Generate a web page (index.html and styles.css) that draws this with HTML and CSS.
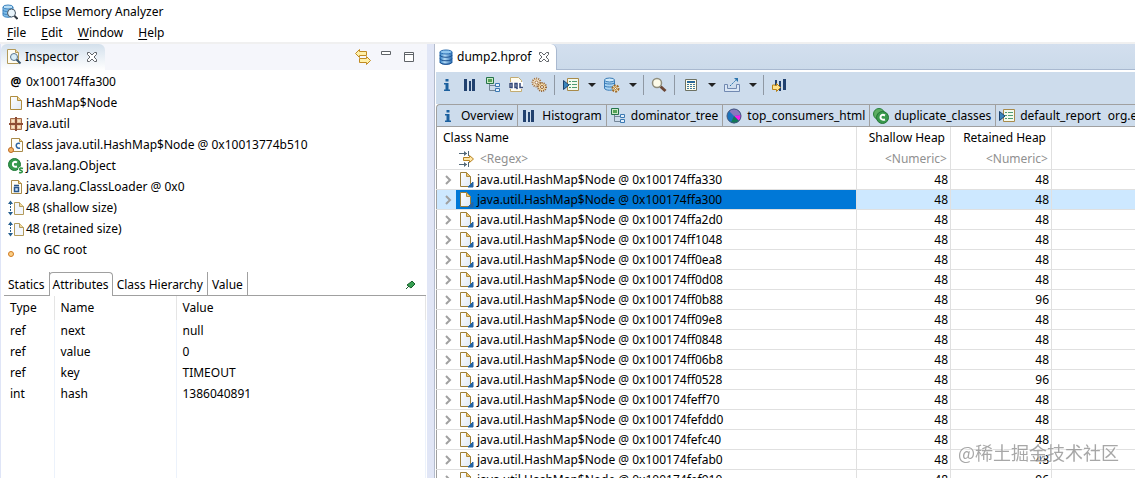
FILE: index.html
```html
<!DOCTYPE html>
<html lang="en">

<head>
    <meta charset="utf-8">
    <title>Eclipse Memory Analyzer</title>
    <link rel="stylesheet" href="styles.css">
</head>

<body>
    <!-- icon definitions -->
    <svg class="defs" aria-hidden="true">
        <defs>
            <linearGradient id="dbFill">
                <stop offset="0" stop-color="#2f7fc4" />
                <stop offset=".4" stop-color="#b5dcf7" />
                <stop offset="1" stop-color="#2467ae" />
            </linearGradient>
            <linearGradient id="pageFill" x1="0" y1="0" x2="1" y2="1">
                <stop offset="0" stop-color="#ffffff" />
                <stop offset="1" stop-color="#dfe8f5" />
            </linearGradient>
        </defs>
        <symbol id="db" viewBox="0 0 16 16">
            <path d="M2 3v10c0 3 12 3 12 0V3z" fill="url(#dbFill)" stroke="#2a6cb0" />
            <ellipse cx="8" cy="3" rx="6" ry="2" fill="#8fc6ef" stroke="#2a6cb0" />
            <path d="M2 6c0 3 12 3 12 0M2 9.500c0 3 12 3 12 0M2 13c0 3 12 3 12 0" fill="none" stroke="#1d5291" />
        </symbol>
        <symbol id="app" viewBox="0 0 16 16">
            <path d="M1 3v8c0 3 10 3 10 0V3z" fill="#7fbce8" stroke="#3c83bf" />
            <ellipse cx="6" cy="3" rx="5" ry="2" fill="#b9def5" stroke="#3c83bf" />
            <path d="M1 6c0 2 10 2 10 0M1 9c0 2 10 2 10 0" fill="none" stroke="#3c83bf" />
            <circle cx="9.500" cy="9" r="4" fill="#e8f4fb" stroke="#4a5a68" />
            <path d="M12.500 12l3 3" stroke="#303840" stroke-width="2" />
        </symbol>
        <symbol id="inspect" viewBox="0 0 16 16">
            <path d="M1.500.5h8l3 3v11h-11z" fill="#fffdf3" stroke="#b39a5b" />
            <path d="M9.500.5v3h3" fill="#efd9a0" stroke="#b39a5b" />
            <circle cx="8" cy="8" r="3.500" fill="#d8edf8" stroke="#5b7690" />
            <path d="M10.500 10.500l4 4" stroke="#34526e" stroke-width="2" />
        </symbol>
        <symbol id="close" viewBox="0 0 12 12">
            <path d="M1.500 1.500h2L6 4l2.500-2.500h2v2L8 6l2.500 2.500v2h-2L6 8l-2.500 2.500h-2v-2L4 6 1.500 3.500z" fill="#fff" stroke="#5f6368" />
        </symbol>
        <symbol id="link" viewBox="0 0 16 16">
            <path d="M.5 4.500l4-4v2h7v4h-7v2z" fill="#fff0a8" stroke="#c08a22" />
            <path d="M15.500 11.500l-4-4v2h-7v4h7v2z" fill="#fff0a8" stroke="#c08a22" />
        </symbol>
        <symbol id="min" viewBox="0 0 16 16">
            <path d="M3.500 2.500h9v3h-9z" fill="#fff" stroke="#5f6368" />
        </symbol>
        <symbol id="max" viewBox="0 0 16 16">
            <path d="M3.500 3.500h9v9h-9zM3.500 5.500h9" fill="#fff" stroke="#5f6368" />
        </symbol>
        <symbol id="file" viewBox="0 0 16 16">
            <path d="M2.500 1.500h7l4 4v9h-11z" fill="url(#pageFill)" stroke="#b08d3e" />
            <path d="M9.500 1.500v4h4" fill="#f0d79a" stroke="#b08d3e" />
        </symbol>
        <symbol id="object" viewBox="0 0 16 16">
            <path d="M2.500.5h6l4 4v10h-10z" fill="url(#pageFill)" stroke="#9c7f3b" />
            <path d="M8.500.5v4h4z" fill="#f0c879" stroke="#b08d3e" />
            <path d="M15 10v5h-5z" fill="#2464a4" stroke="#2464a4" />
        </symbol>
        <symbol id="package" viewBox="0 0 16 16">
            <path d="M2.500 2.500h11v11h-11z" fill="#eac7a1" stroke="#a46a48" />
            <path d="M8 1v14M1 8h14" stroke="#8d4d35" stroke-width="2" />
            <path d="M4 4h2v2H4zM10 4h2v2h-2zM4 10h2v2H4zM10 10h2v2h-2z" fill="#f7e4c9" />
        </symbol>
        <symbol id="class" viewBox="0 0 16 16">
            <path d="M3.500 1.500h8l3 3v10h-11z" fill="#fffef8" stroke="#a88a4a" />
            <path d="M11.500 1.500v3h3" fill="#f0d79a" stroke="#b08d3e" />
            <path d="M12 6.500c-5-2-5 6 0 4.500" fill="none" stroke="#2b64a4" stroke-width="1.500" />
            <circle cx="3" cy="13" r="2.500" fill="#f5b568" stroke="#bd6820" />
        </symbol>
        <symbol id="super" viewBox="0 0 16 16">
            <circle cx="6.500" cy="6.500" r="6" fill="#35994c" stroke="#1d7835" />
            <path d="M9 4.500C4 1.500 3 10.500 9 8.500" fill="none" stroke="#fff" stroke-width="2" />
            <path d="M15 10.500c-4-1.500-4 1.500-2 2s2 3-2 2" fill="none" stroke="#fff" stroke-width="3" />
            <path d="M15 10.500c-4-1.500-4 1.500-2 2s2 3-2 2" fill="none" stroke="#2b9343" stroke-width="1.500" />
        </symbol>
        <symbol id="loader" viewBox="0 0 16 16">
            <path d="M3.500 1.500h7l3 3v10h-10z" fill="#fffef4" stroke="#a88a4a" />
            <path d="M10.500 1.500v3h3" fill="#f0d79a" stroke="#b08d3e" />
            <path d="M6 6.500h5M6.500 8.500h4v4h-4z" fill="#cfe5fa" stroke="#27558c" stroke-width="1.500" />
        </symbol>
        <symbol id="size" viewBox="0 0 16 16">
            <path d="M6.500 2.500h5l4 4v8h-9z" fill="#f2f6fc" stroke="#b39a5b" />
            <path d="M11.500 2.500v4h4" fill="#f0d79a" stroke="#b39a5b" />
            <path d="M2.500 3v10" stroke="#235d8e" stroke-dasharray="2 1" />
            <path d="M0 4l2.500-3.500L5 4zM0 12l2.500 3.500L5 12z" fill="#235d8e" />
        </symbol>
        <symbol id="root" viewBox="0 0 16 16">
            <circle cx="3" cy="12" r="2.500" fill="#fbcf87" stroke="#d07a20" />
        </symbol>
        <symbol id="pin" viewBox="0 0 12 12">
            <path d="M7 2l3 3-1 1-3 3-4-3 4-3z" fill="#37a052" stroke="#175f2b" />
            <path d="M4 7l-3 3" stroke="#175f2b" />
        </symbol>
        <symbol id="info" viewBox="0 0 16 16">
            <path d="M6.500 2h3v2.500h-3zM6 6h3.500v6.500H11V14H5v-1.500h1.500v-5H5V6z" fill="#1c609e" />
        </symbol>
        <symbol id="bars" viewBox="0 0 16 16">
            <path d="M2 2h3v12H2zM7 4h2v10H7zM10 2h3v12h-3z" fill="#21416f" />
        </symbol>
        <symbol id="tree" viewBox="0 0 16 16">
            <path d="M4.500 7v6.500H10M4.500 8.500H10" fill="none" stroke="#748697" />
            <path d="M1.500.5h7v6h-7z" fill="#cbe8c4" stroke="#25734a" />
            <path d="M3 2h4v3H3z" fill="#55a557" />
            <path d="M10.500 6.500h4v3h-4zM10.500 11.500h4v3h-4z" fill="#e4f0fb" stroke="#3b78b2" />
        </symbol>
        <symbol id="oql" viewBox="0 0 16 16">
            <path d="M2.500.5h8l3 3v11h-11z" fill="#fffdf0" stroke="#c3ac72" />
            <path d="M1 5h14v7H1z" fill="#fff" />
            <path d="M2 6.500h2v4H2zM7 6.500h2v4H7zM8 10l1.500 2M12 6v4.500h3" fill="none" stroke="#354a77" stroke-width="1.500" />
        </symbol>
        <symbol id="gears" viewBox="0 0 16 16">
            <circle cx="5.500" cy="5.500" r="4" fill="#f4e2c4" stroke="#a37443" stroke-width="2" stroke-dasharray="1 1" />
            <circle cx="5.500" cy="5.500" r="1.500" fill="#fff" stroke="#a37443" />
            <circle cx="11" cy="10" r="4" fill="#f7dfad" stroke="#93602f" stroke-width="2" stroke-dasharray="1 1" />
            <circle cx="11" cy="10" r="1.500" fill="#fff" stroke="#93602f" />
        </symbol>
        <symbol id="report" viewBox="0 0 16 16">
            <path d="M4.500 1.500h11v12h-11z" fill="#f4faee" stroke="#a88a4a" />
            <path d="M6 4.500h2M6 7.500h2M6 10.500h2M9 4.500h5M9 7.500h5M9 10.500h5" stroke="#4f9b73" />
            <path d="M.5 3.500v9L6 8z" fill="#3a86bd" stroke="#1b426f" />
        </symbol>
        <symbol id="dbgear" viewBox="0 0 16 16">
            <path d="M.5 3v8c0 3 10 3 10 0V3z" fill="#a8d3f2" stroke="#397bb6" />
            <ellipse cx="5.500" cy="3" rx="5" ry="2" fill="#d0eafa" stroke="#397bb6" />
            <path d="M.5 5.500c0 2 10 2 10 0M.5 8.500c0 2 10 2 10 0" fill="none" stroke="#397bb6" />
            <circle cx="11.500" cy="11.500" r="3" fill="#fff2c9" stroke="#a06a26" stroke-width="2" stroke-dasharray="2 1" />
            <circle cx="11.500" cy="11.500" r="1" fill="#fff" stroke="#a06a26" />
        </symbol>
        <symbol id="search" viewBox="0 0 16 16">
            <path d="M9.500 9.500l5 4.500" stroke="#6b4636" stroke-width="3" />
            <circle cx="6" cy="6" r="4.500" fill="#fdfbe9" stroke="#8f8d7c" stroke-width="1.500" />
        </symbol>
        <symbol id="calc" viewBox="0 0 16 16">
            <path d="M2.500 2.500h11v11h-11z" fill="#fffceb" stroke="#6d7162" />
            <path d="M4 4h8v2H4z" fill="#2a6898" />
            <path d="M4 7h2v1H4zM7 7h2v1H7zM10 7h2v1h-2zM4 9h2v1H4zM7 9h2v1H7zM10 9h2v1h-2zM4 11h2v1H4zM7 11h2v1H7zM10 11h2v1h-2z" fill="#417a9c" />
        </symbol>
        <symbol id="export" viewBox="0 0 16 16">
            <path d="M3.500 7.500h-3v7h15v-7h-3v4h-9z" fill="#dbe7f5" stroke="#7189b1" />
            <path d="M6 9l6-6" stroke="#2b74ad" stroke-dasharray="2 1" />
            <path d="M10 1h4v4z" fill="#2b74ad" />
        </symbol>
        <symbol id="compare" viewBox="0 0 16 16">
            <path d="M4 3h2v6H4zM8 4h2v10H8zM12 2h3v11h-3z" fill="#21416f" />
            <path d="M1.500 8v4.500h4v2l4-4-4-4v2H4V8z" fill="#ffe28b" stroke="#b98318" />
        </symbol>
        <symbol id="pie" viewBox="0 0 16 16">
            <circle cx="8" cy="8" r="7" fill="#1b73bd" />
            <path d="M8 8L3 3a7 7 0 0 1 12 4z" fill="#8878bd" />
            <path d="M8 8l7-1a7 7 0 0 1-2 6z" fill="#f51be9" />
            <path d="M8 8l5 5a7 7 0 0 1-8 1.500z" fill="#137957" />
            <circle cx="8" cy="8" r="7" fill="none" stroke="#40577e" />
        </symbol>
        <symbol id="dup" viewBox="0 0 16 16">
            <circle cx="6" cy="6" r="5.500" fill="#5cae62" stroke="#27803b" />
            <circle cx="9.500" cy="9.500" r="6" fill="#39994c" stroke="#237437" />
            <path d="M12 7.500c-6-3-6 6 0 4" fill="none" stroke="#fff" stroke-width="2" />
        </symbol>
        <symbol id="filter" viewBox="0 0 16 16">
            <path d="M0 2.500h8M0 13.500h8M9.500 0v5M9.500 11v5" stroke="#536878" />
            <path d="M5 0l3 2.500L5 5zM5 11l3 2.500L5 16z" fill="#536878" />
            <path d="M4.500 6.500h6v-2l4 3.500-4 3.500v-2h-6z" fill="#ffe6a5" stroke="#b78323" />
        </symbol>
        <symbol id="chevron" viewBox="0 0 8 10">
            <path d="M2 1l4 4-4 4" fill="none" stroke="#a0a0a0" stroke-width="2" />
        </symbol>
        <symbol id="arrow" viewBox="0 0 8 4">
            <path d="M0 0h8L4 4z" fill="#222" />
        </symbol>
    </svg>

    <header class="titlebar">
        <svg class="icon"><use href="#app" /></svg>
        <span>Eclipse Memory Analyzer</span>
    </header>
    <nav class="menubar">
        <button type="button"><u>F</u>ile</button>
        <button type="button"><u>E</u>dit</button>
        <button type="button"><u>W</u>indow</button>
        <button type="button"><u>H</u>elp</button>
    </nav>

    <main class="workbench">
        <section class="inspector">
            <div class="view-header">
                <div class="view-tab">
                    <svg class="icon"><use href="#inspect" /></svg>
                    <span>Inspector</span>
                    <button type="button" aria-label="Close Inspector"><svg class="icon-small"><use href="#close" /></svg></button>
                </div>
                <div class="view-actions">
                    <button type="button" aria-label="Link with snapshot"><svg class="icon"><use href="#link" /></svg></button>
                    <button type="button" aria-label="Minimize"><svg class="icon"><use href="#min" /></svg></button>
                    <button type="button" aria-label="Maximize"><svg class="icon"><use href="#max" /></svg></button>
                </div>
            </div>
            <ul class="details">
                <li><span class="at">@</span>0x100174ffa300</li>
                <li><svg class="icon"><use href="#file" /></svg>HashMap$Node</li>
                <li><svg class="icon"><use href="#package" /></svg>java.util</li>
                <li><svg class="icon"><use href="#class" /></svg>class java.util.HashMap$Node @ 0x10013774b510</li>
                <li><svg class="icon"><use href="#super" /></svg>java.lang.Object</li>
                <li><svg class="icon"><use href="#loader" /></svg>java.lang.ClassLoader @ 0x0</li>
                <li><svg class="icon"><use href="#size" /></svg>48 (shallow size)</li>
                <li><svg class="icon"><use href="#size" /></svg>48 (retained size)</li>
                <li><svg class="icon"><use href="#root" /></svg>no GC root</li>
            </ul>
            <div class="attr-tabs">
                <button type="button">Statics</button>
                <button type="button" class="active">Attributes</button>
                <button type="button">Class Hierarchy</button>
                <button type="button">Value</button>
                <button type="button" class="pin" aria-label="Pin tab"><svg class="icon-small"><use href="#pin" /></svg></button>
            </div>
            <table class="attributes">
                <colgroup>
                    <col class="col-type">
                    <col class="col-name">
                    <col>
                </colgroup>
                <thead>
                    <tr><th>Type</th><th>Name</th><th>Value</th></tr>
                </thead>
                <tbody>
                    <tr><td>ref</td><td>next</td><td>null</td></tr>
                    <tr><td>ref</td><td>value</td><td>0</td></tr>
                    <tr><td>ref</td><td>key</td><td>TIMEOUT</td></tr>
                    <tr><td>int</td><td>hash</td><td>1386040891</td></tr>
                    <tr class="filler"><td></td><td></td><td></td></tr>
                </tbody>
            </table>
        </section>

        <section class="editor">
            <div class="editor-header">
                <div class="editor-tab">
                    <svg class="icon"><use href="#db" /></svg>
                    <span>dump2.hprof</span>
                    <button type="button" aria-label="Close dump2.hprof"><svg class="icon-small"><use href="#close" /></svg></button>
                </div>
            </div>
            <div class="editor-body">
                <div class="toolbar">
                    <div class="tools">
                        <button type="button" aria-label="Overview"><svg class="icon"><use href="#info" /></svg></button>
                        <button type="button" aria-label="Histogram"><svg class="icon"><use href="#bars" /></svg></button>
                        <button type="button" aria-label="Dominator tree"><svg class="icon"><use href="#tree" /></svg></button>
                        <button type="button" aria-label="OQL"><svg class="icon"><use href="#oql" /></svg></button>
                        <button type="button" aria-label="Thread overview"><svg class="icon"><use href="#gears" /></svg></button>
                    </div>
                    <div class="tools wide">
                        <button type="button" aria-label="Run report"><svg class="icon"><use href="#report" /></svg><svg class="arrow"><use href="#arrow" /></svg></button>
                        <button type="button" aria-label="Query browser"><svg class="icon"><use href="#dbgear" /></svg><svg class="arrow"><use href="#arrow" /></svg></button>
                    </div>
                    <div class="tools">
                        <button type="button" aria-label="Find object"><svg class="icon"><use href="#search" /></svg></button>
                    </div>
                    <div class="tools wide">
                        <button type="button" aria-label="Calculate retained size"><svg class="icon"><use href="#calc" /></svg><svg class="arrow"><use href="#arrow" /></svg></button>
                        <button type="button" aria-label="Export"><svg class="icon"><use href="#export" /></svg><svg class="arrow"><use href="#arrow" /></svg></button>
                    </div>
                    <div class="tools">
                        <button type="button" aria-label="Compare"><svg class="icon"><use href="#compare" /></svg></button>
                    </div>
                </div>
                <div class="pages">
                    <button type="button"><svg class="icon"><use href="#info" /></svg>Overview</button>
                    <button type="button"><svg class="icon"><use href="#bars" /></svg>Histogram</button>
                    <button type="button"><svg class="icon"><use href="#tree" /></svg>dominator_tree</button>
                    <button type="button"><svg class="icon"><use href="#pie" /></svg>top_consumers_html</button>
                    <button type="button"><svg class="icon"><use href="#dup" /></svg>duplicate_classes</button>
                    <button type="button" class="open"><svg class="icon"><use href="#report" /></svg>default_report</button>
                    <button type="button" class="open">org.e</button>
                </div>
                <table class="objects">
                    <colgroup>
                        <col class="col-class">
                        <col class="col-shallow">
                        <col class="col-retained">
                        <col>
                    </colgroup>
                    <thead>
                        <tr><th>Class Name</th><th>Shallow Heap</th><th>Retained Heap</th><th></th></tr>
                        <tr class="filters">
                            <td><div class="regex"><svg class="icon"><use href="#filter" /></svg><input type="text" placeholder="&lt;Regex&gt;" aria-label="Class name filter"></div></td>
                            <td><input type="text" placeholder="&lt;Numeric&gt;" aria-label="Shallow heap filter"></td>
                            <td><input type="text" placeholder="&lt;Numeric&gt;" aria-label="Retained heap filter"></td>
                            <td></td>
                        </tr>
                    </thead>
                    <tbody>
                        <tr><td><div class="node"><svg class="chevron"><use href="#chevron" /></svg><span><svg class="icon"><use href="#object" /></svg>java.util.HashMap$Node @ 0x100174ffa330</span></div></td><td>48</td><td>48</td><td></td></tr>
                        <tr class="selected"><td><div class="node"><svg class="chevron"><use href="#chevron" /></svg><span><svg class="icon"><use href="#object" /></svg>java.util.HashMap$Node @ 0x100174ffa300</span></div></td><td>48</td><td>48</td><td></td></tr>
                        <tr><td><div class="node"><svg class="chevron"><use href="#chevron" /></svg><span><svg class="icon"><use href="#object" /></svg>java.util.HashMap$Node @ 0x100174ffa2d0</span></div></td><td>48</td><td>48</td><td></td></tr>
                        <tr><td><div class="node"><svg class="chevron"><use href="#chevron" /></svg><span><svg class="icon"><use href="#object" /></svg>java.util.HashMap$Node @ 0x100174ff1048</span></div></td><td>48</td><td>48</td><td></td></tr>
                        <tr><td><div class="node"><svg class="chevron"><use href="#chevron" /></svg><span><svg class="icon"><use href="#object" /></svg>java.util.HashMap$Node @ 0x100174ff0ea8</span></div></td><td>48</td><td>48</td><td></td></tr>
                        <tr><td><div class="node"><svg class="chevron"><use href="#chevron" /></svg><span><svg class="icon"><use href="#object" /></svg>java.util.HashMap$Node @ 0x100174ff0d08</span></div></td><td>48</td><td>48</td><td></td></tr>
                        <tr><td><div class="node"><svg class="chevron"><use href="#chevron" /></svg><span><svg class="icon"><use href="#object" /></svg>java.util.HashMap$Node @ 0x100174ff0b88</span></div></td><td>48</td><td>96</td><td></td></tr>
                        <tr><td><div class="node"><svg class="chevron"><use href="#chevron" /></svg><span><svg class="icon"><use href="#object" /></svg>java.util.HashMap$Node @ 0x100174ff09e8</span></div></td><td>48</td><td>48</td><td></td></tr>
                        <tr><td><div class="node"><svg class="chevron"><use href="#chevron" /></svg><span><svg class="icon"><use href="#object" /></svg>java.util.HashMap$Node @ 0x100174ff0848</span></div></td><td>48</td><td>48</td><td></td></tr>
                        <tr><td><div class="node"><svg class="chevron"><use href="#chevron" /></svg><span><svg class="icon"><use href="#object" /></svg>java.util.HashMap$Node @ 0x100174ff06b8</span></div></td><td>48</td><td>48</td><td></td></tr>
                        <tr><td><div class="node"><svg class="chevron"><use href="#chevron" /></svg><span><svg class="icon"><use href="#object" /></svg>java.util.HashMap$Node @ 0x100174ff0528</span></div></td><td>48</td><td>96</td><td></td></tr>
                        <tr><td><div class="node"><svg class="chevron"><use href="#chevron" /></svg><span><svg class="icon"><use href="#object" /></svg>java.util.HashMap$Node @ 0x100174feff70</span></div></td><td>48</td><td>48</td><td></td></tr>
                        <tr><td><div class="node"><svg class="chevron"><use href="#chevron" /></svg><span><svg class="icon"><use href="#object" /></svg>java.util.HashMap$Node @ 0x100174fefdd0</span></div></td><td>48</td><td>48</td><td></td></tr>
                        <tr><td><div class="node"><svg class="chevron"><use href="#chevron" /></svg><span><svg class="icon"><use href="#object" /></svg>java.util.HashMap$Node @ 0x100174fefc40</span></div></td><td>48</td><td>48</td><td></td></tr>
                        <tr><td><div class="node"><svg class="chevron"><use href="#chevron" /></svg><span><svg class="icon"><use href="#object" /></svg>java.util.HashMap$Node @ 0x100174fefab0</span></div></td><td>48</td><td>48</td><td></td></tr>
                        <tr><td><div class="node"><svg class="chevron"><use href="#chevron" /></svg><span><svg class="icon"><use href="#object" /></svg>java.util.HashMap$Node @ 0x100174fef910</span></div></td><td>48</td><td>96</td><td></td></tr>
                    </tbody>
                </table>
            </div>
        </section>
    </main>
    <div class="watermark">@稀土掘金技术社区</div>
</body>

</html>
```
FILE: styles.css
```css
* {
    box-sizing: border-box;
}

body {
    margin: 0;
    height: 100vh;
    display: flex;
    flex-direction: column;
    overflow: hidden;
    background-color: #ffffff;
    color: #000000;
    font-family: "Noto Sans", "Noto Sans CJK SC", sans-serif;
    font-size: 12px;
    line-height: 20px;
}

button,
input {
    font: inherit;
    color: inherit;
    border: none;
    background: none;
    padding: 0;
    margin: 0;
}

svg {
    display: block;
    flex: none;
}

.defs {
    position: absolute;
    width: 0;
    height: 0;
}

.icon {
    width: 16px;
    height: 16px;
}

.icon-small {
    width: 12px;
    height: 12px;
}

.titlebar {
    display: flex;
    align-items: center;
    gap: 5px;
    height: 23px;
    padding-left: 2px;
}

.menubar {
    display: flex;
    gap: 15px;
    height: 21px;
    padding-left: 7px;
    border-bottom: 2px solid #f0f0f0;
}

.menubar u {
    text-underline-offset: 2px;
}

.workbench {
    flex: 1;
    min-height: 0;
    display: grid;
    grid-template-columns: 427px 1fr;
    gap: 7px;
    background-color: #e1e6f6;
}

/* left view */
.inspector {
    display: flex;
    flex-direction: column;
    min-width: 0;
    background-color: #ffffff;
    border-left: 1px solid #dfe5f7;
}

.view-header {
    display: flex;
    justify-content: space-between;
    height: 26px;
    background-color: #f5f6fb;
}

.view-tab {
    display: flex;
    align-items: center;
    gap: 3px;
    padding: 0 7px 0 5px;
    border-radius: 6px 6px 0 0;
    background: linear-gradient(#d3e0ec, #ffffff);
}

.view-tab button,
.editor-tab button {
    margin-left: 4px;
}

.view-actions {
    display: flex;
    align-items: center;
    gap: 7px;
    padding-right: 10px;
}

.details {
    list-style: none;
    margin: 0;
    padding: 1px 0 12px 7px;
}

.details li {
    display: flex;
    align-items: center;
    gap: 2px;
    height: 21px;
}

.at {
    width: 16px;
    text-align: center;
    font-weight: bold;
}

.attr-tabs {
    display: flex;
    height: 24px;
    margin: 0 1px 0 3px;
    border-bottom: 1px solid #a0a0a0;
}

.attr-tabs button {
    padding: 2px 4px 0;
    border-right: 1px solid #a0a0a0;
}

.attr-tabs .active {
    height: 24px;
    padding: 1px 3px 0;
    background-color: #ffffff;
    border: 1px solid #a0a0a0;
    border-bottom: none;
    border-radius: 4px 4px 0 0;
    margin-left: -1px;
}

.attr-tabs .pin {
    margin-left: auto;
    border: none;
    padding-right: 9px;
}

table {
    border-collapse: collapse;
    table-layout: fixed;
}

th {
    font-weight: normal;
    text-align: left;
}

.attributes {
    flex: 1;
    width: calc(100% - 4px);
    margin-left: 3px;
}

.col-type {
    width: 50px;
}

.col-name {
    width: 122px;
}

.attributes th,
.attributes td {
    height: 21px;
    padding: 0 6px;
    border-right: 1px solid #ecf2fb;
}

.attributes th {
    height: 24px;
    border-color: #e5e5e5;
}

.attributes .filler td {
    height: 100%;
}

/* right editor */
.editor {
    display: flex;
    flex-direction: column;
    min-width: 0;
    overflow: hidden;
    background-color: #ffffff;
    border-left: 1px solid #b4bccd;
}

.editor-header {
    display: flex;
    height: 26px;
    background: linear-gradient(#d3dfee, #cbdaea);
    border-bottom: 1px solid #a9b9d0;
}

.editor-tab {
    display: flex;
    align-items: center;
    gap: 3px;
    height: 26px;
    padding: 0 6px 0 3px;
    background-color: #ffffff;
    border-right: 1px solid #a9b9d0;
    border-radius: 0 6px 0 0;
}

.editor-body {
    flex: 1;
    min-height: 0;
    margin: 2px 0 0 1px;
}

.toolbar {
    display: flex;
    align-items: center;
    height: 32px;
    padding-bottom: 7px;
    background-color: #cddcec;
}

.tools {
    display: flex;
    gap: 7px;
    padding: 0 7px;
    height: 20px;
    align-items: center;
    border-right: 1px solid #8f98a3;
}

.tools:first-child {
    padding-left: 3px;
}

.tools:last-child {
    border: none;
}

.tools button {
    display: flex;
    align-items: center;
    gap: 9px;
}

.wide {
    gap: 8px;
    padding: 0 6px 0 8px;
}

.arrow {
    width: 8px;
    height: 4px;
}

.pages {
    display: flex;
    height: 23px;
    overflow: hidden;
    background-color: #cddcec;
    border: 1px solid #a0a0a0;
    border-right: none;
    border-radius: 4px 0 0 0;
}

.pages button {
    display: flex;
    align-items: center;
    flex: none;
    gap: 5px;
    padding: 0 4px 0 3px;
    border-right: 1px solid #a0a0a0;
}

.pages .open {
    border-right: none;
}

.objects {
    width: 100%;
    border-left: 1px solid #a0a0a0;
}

.col-class {
    width: 420px;
}

.col-shallow {
    width: 94px;
}

.col-retained {
    width: 101px;
}

.objects th,
.objects td {
    padding: 0;
    border-right: 1px solid #e0e0e0;
}

.objects th {
    height: 22px;
    padding: 0 5px 0 6px;
}

.objects th + th,
.objects td + td {
    text-align: right;
}

.objects th + th {
    padding: 0 5px 0 0;
}

.objects tr > :last-child {
    border-right: none;
}

.objects tbody td {
    height: 20px;
    line-height: 19px;
    border-bottom: 1px solid #e0e0e0;
}

.objects tbody td + td {
    padding-right: 2px;
}

.filters td {
    height: 20px;
    border-bottom: 1px solid #e0e0e0;
}

.filters input {
    display: block;
    width: 100%;
    padding-right: 3px;
    text-align: right;
}

.filters .regex input {
    text-align: left;
}

.filters input::placeholder {
    color: #909090;
    opacity: 1;
}

.regex {
    display: flex;
    align-items: center;
    gap: 5px;
    padding-left: 22px;
}

.node {
    display: flex;
    align-items: center;
    height: 19px;
    padding-left: 7px;
    gap: 4px;
}

.node span {
    display: flex;
    align-items: center;
    flex: 1;
    gap: 3px;
    padding-left: 2px;
}

.chevron {
    width: 8px;
    height: 10px;
}

.selected {
    background-color: #cde8ff;
}

.selected .node span {
    background-color: #0078d7;
}

.watermark {
    position: fixed;
    right: 16px;
    bottom: 13px;
    color: rgba(130, 130, 130, 0.7);
    font-family: "Noto Sans CJK SC", sans-serif;
    font-size: 18px;
    line-height: 26px;
    text-shadow: 1px 1px 1px #ffffff;
}
```
